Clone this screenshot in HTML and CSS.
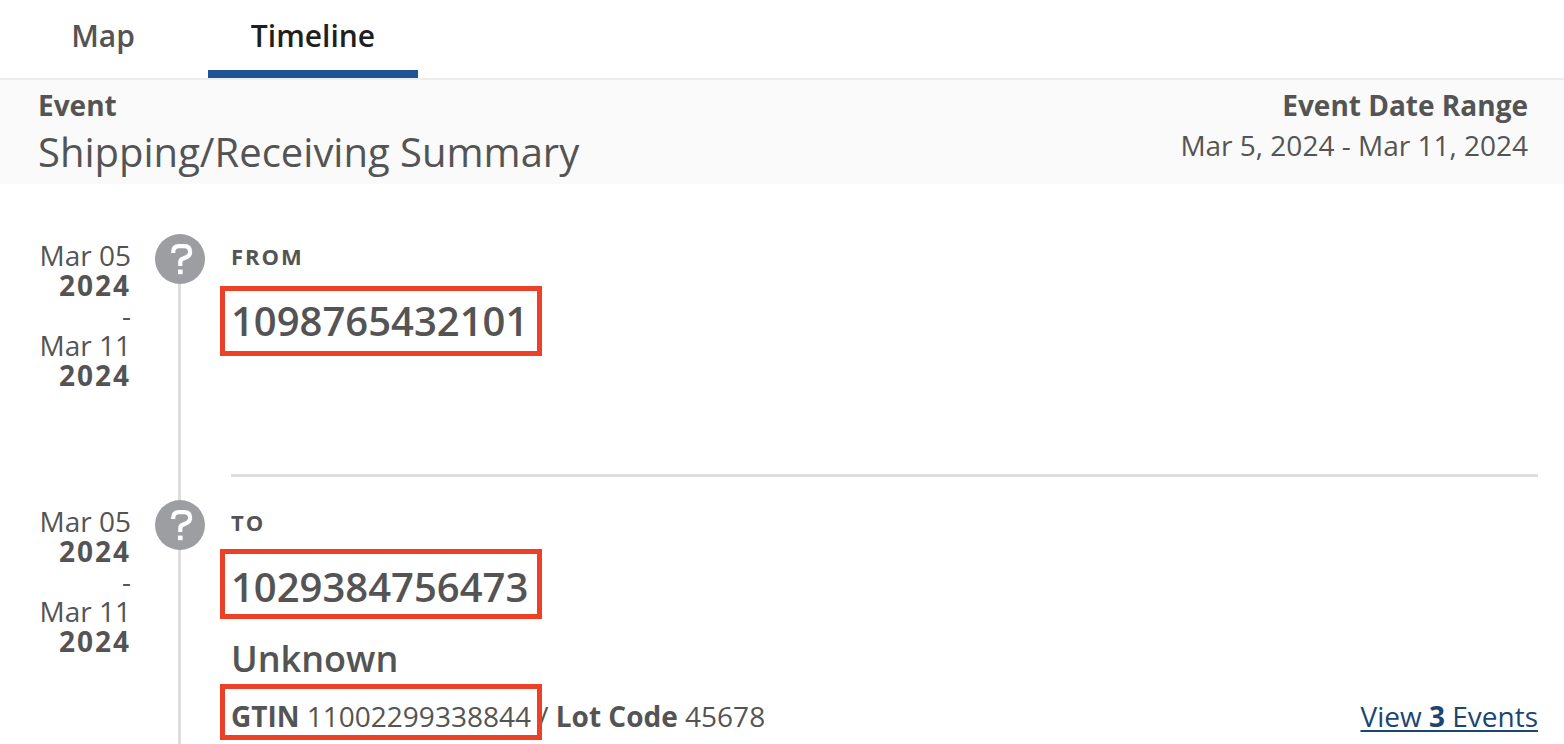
FILE: index.html
```html
<!DOCTYPE html>
<html lang="en">
<head>
    <meta charset="UTF-8">
    <meta name="viewport" content="width=device-width, initial-scale=1.0">
    <title>Timeline</title>
    <link rel="stylesheet" href="styles.css">
</head>
<body>
    <nav class="tabs" role="tablist">
        <button class="tab" type="button" role="tab" aria-selected="false">Map</button>
        <button class="tab active" type="button" role="tab" aria-selected="true">Timeline</button>
    </nav>

    <header class="summary">
        <div>
            <div class="label">Event</div>
            <h1>Shipping/Receiving Summary</h1>
        </div>
        <div class="range">
            <div class="label">Event Date Range</div>
            <div class="range-dates">Mar 5, 2024 - Mar 11, 2024</div>
        </div>
    </header>

    <main class="timeline">
        <section class="entry">
            <div class="dates">
                Mar 05<br><b>2024</b><br>-<br>Mar 11<br><b>2024</b>
            </div>
            <div class="rail">
                <svg class="icon" viewBox="0 0 50 50" aria-hidden="true">
                    <circle cx="25" cy="25" r="25"/>
                    <path d="M18.200 19v-1q0-5.800 5.800-5.800h5.300q5.800 0 5.800 5.800 0 3.600-3.600 5.200l-4.200 1.800q-2 .9-2 3V32"/>
                    <rect x="23" y="35.600" width="4.600" height="4.600"/>
                </svg>
            </div>
            <div class="content divided">
                <div class="direction">From</div>
                <h2><span class="mark">1098765432101</span></h2>
            </div>
        </section>

        <section class="entry last">
            <div class="dates">
                Mar 05<br><b>2024</b><br>-<br>Mar 11<br><b>2024</b>
            </div>
            <div class="rail">
                <svg class="icon" viewBox="0 0 50 50" aria-hidden="true">
                    <circle cx="25" cy="25" r="25"/>
                    <path d="M18.200 19v-1q0-5.800 5.800-5.800h5.300q5.800 0 5.800 5.800 0 3.600-3.600 5.200l-4.200 1.800q-2 .9-2 3V32"/>
                    <rect x="23" y="35.600" width="4.600" height="4.600"/>
                </svg>
            </div>
            <div class="content">
                <div class="direction">To</div>
                <h2><span class="mark mark-high">1029384756473</span></h2>
                <h3>Unknown</h3>
                <div class="details">
                    <div><span class="mark mark-small"><b>GTIN</b> 11002299338844</span> / <b>Lot Code</b> 45678</div>
                    <a href="#events">View <b>3</b> Events</a>
                </div>
            </div>
        </section>
    </main>
</body>
</html>
```
FILE: styles.css
```css
*, *::after {
    box-sizing: border-box;
}
body {
    display: flex;
    flex-direction: column;
    min-height: 100vh;
    margin: 0;
    background-color: #fff;
    color: #545454;
    font-family: "Open Sans", sans-serif;
    font-size: 28px;
    line-height: 30px;
}
h1, h2, h3 {
    margin: 0;
}
.tabs {
    display: flex;
    height: 80px;
    border-bottom: 2px solid #ededed;
}
.tab {
    width: 210px;
    padding: 0;
    border: none;
    border-bottom: 8px solid transparent;
    background: none;
    color: #545454;
    font-family: inherit;
    font-size: 30px;
    font-weight: 600;
    cursor: pointer;
}
.tab:first-child {
    width: 208px;
    padding-right: 2px;
}
.tab.active {
    border-bottom-color: #1f5590;
    color: #1f1f1f;
}
.summary {
    display: flex;
    justify-content: space-between;
    height: 104px;
    padding: 5px 36px 0 38px;
    background-color: #fafafa;
}
.label {
    line-height: 40px;
    font-weight: bold;
}
h1 {
    font-size: 40px;
    font-weight: normal;
    line-height: 54px;
}
.range {
    text-align: right;
}
.range-dates {
    line-height: 40px;
}
.timeline {
    display: flex;
    flex: 1;
    flex-direction: column;
    padding: 50px 26px 0 0;
}
.entry {
    display: grid;
    grid-template-columns: 131px 50px 1fr;
    gap: 0 24px;
    min-height: 266px;
}
.entry.last {
    flex: 1;
    min-height: 244px;
}
.dates {
    padding-top: 6px;
    text-align: right;
}
.dates b {
    letter-spacing: 2px;
}
.rail {
    background: linear-gradient(#dedede, #dedede) 23px 0 / 3px 100% no-repeat;
}
.icon {
    display: block;
    width: 50px;
    height: 50px;
}
.icon circle {
    fill: #9d9ea2;
}
.icon path {
    fill: none;
    stroke: #fff;
    stroke-width: 4.2;
}
.icon rect {
    fill: #fff;
}
.content {
    padding: 7px 0 0 2px;
}
.content.divided {
    margin: 0 0 23px 2px;
    padding-left: 0;
    border-bottom: 3px solid #dedede;
}
.direction {
    font-size: 22px;
    font-weight: bold;
    letter-spacing: 2px;
    text-transform: uppercase;
}
h2 {
    margin-top: 20px;
    font-size: 40px;
    font-weight: 600;
    line-height: 60px;
}
h3 {
    margin-top: 17px;
    font-size: 36px;
    font-weight: 600;
    line-height: 50px;
}
.details {
    display: flex;
    justify-content: space-between;
    margin-top: 17px;
}
.mark {
    position: relative;
}
/* red callout drawn around the value */
.mark::after {
    content: "";
    position: absolute;
    top: -7px;
    left: -11px;
    width: 322px;
    height: 70px;
    border: 5px solid #ec4027;
}
.mark-high::after {
    top: -10px;
}
.mark-small::after {
    top: -13px;
    height: 56px;
}
a {
    color: #1a4673;
    text-decoration-thickness: 2px;
    text-underline-offset: 3px;
}
```
